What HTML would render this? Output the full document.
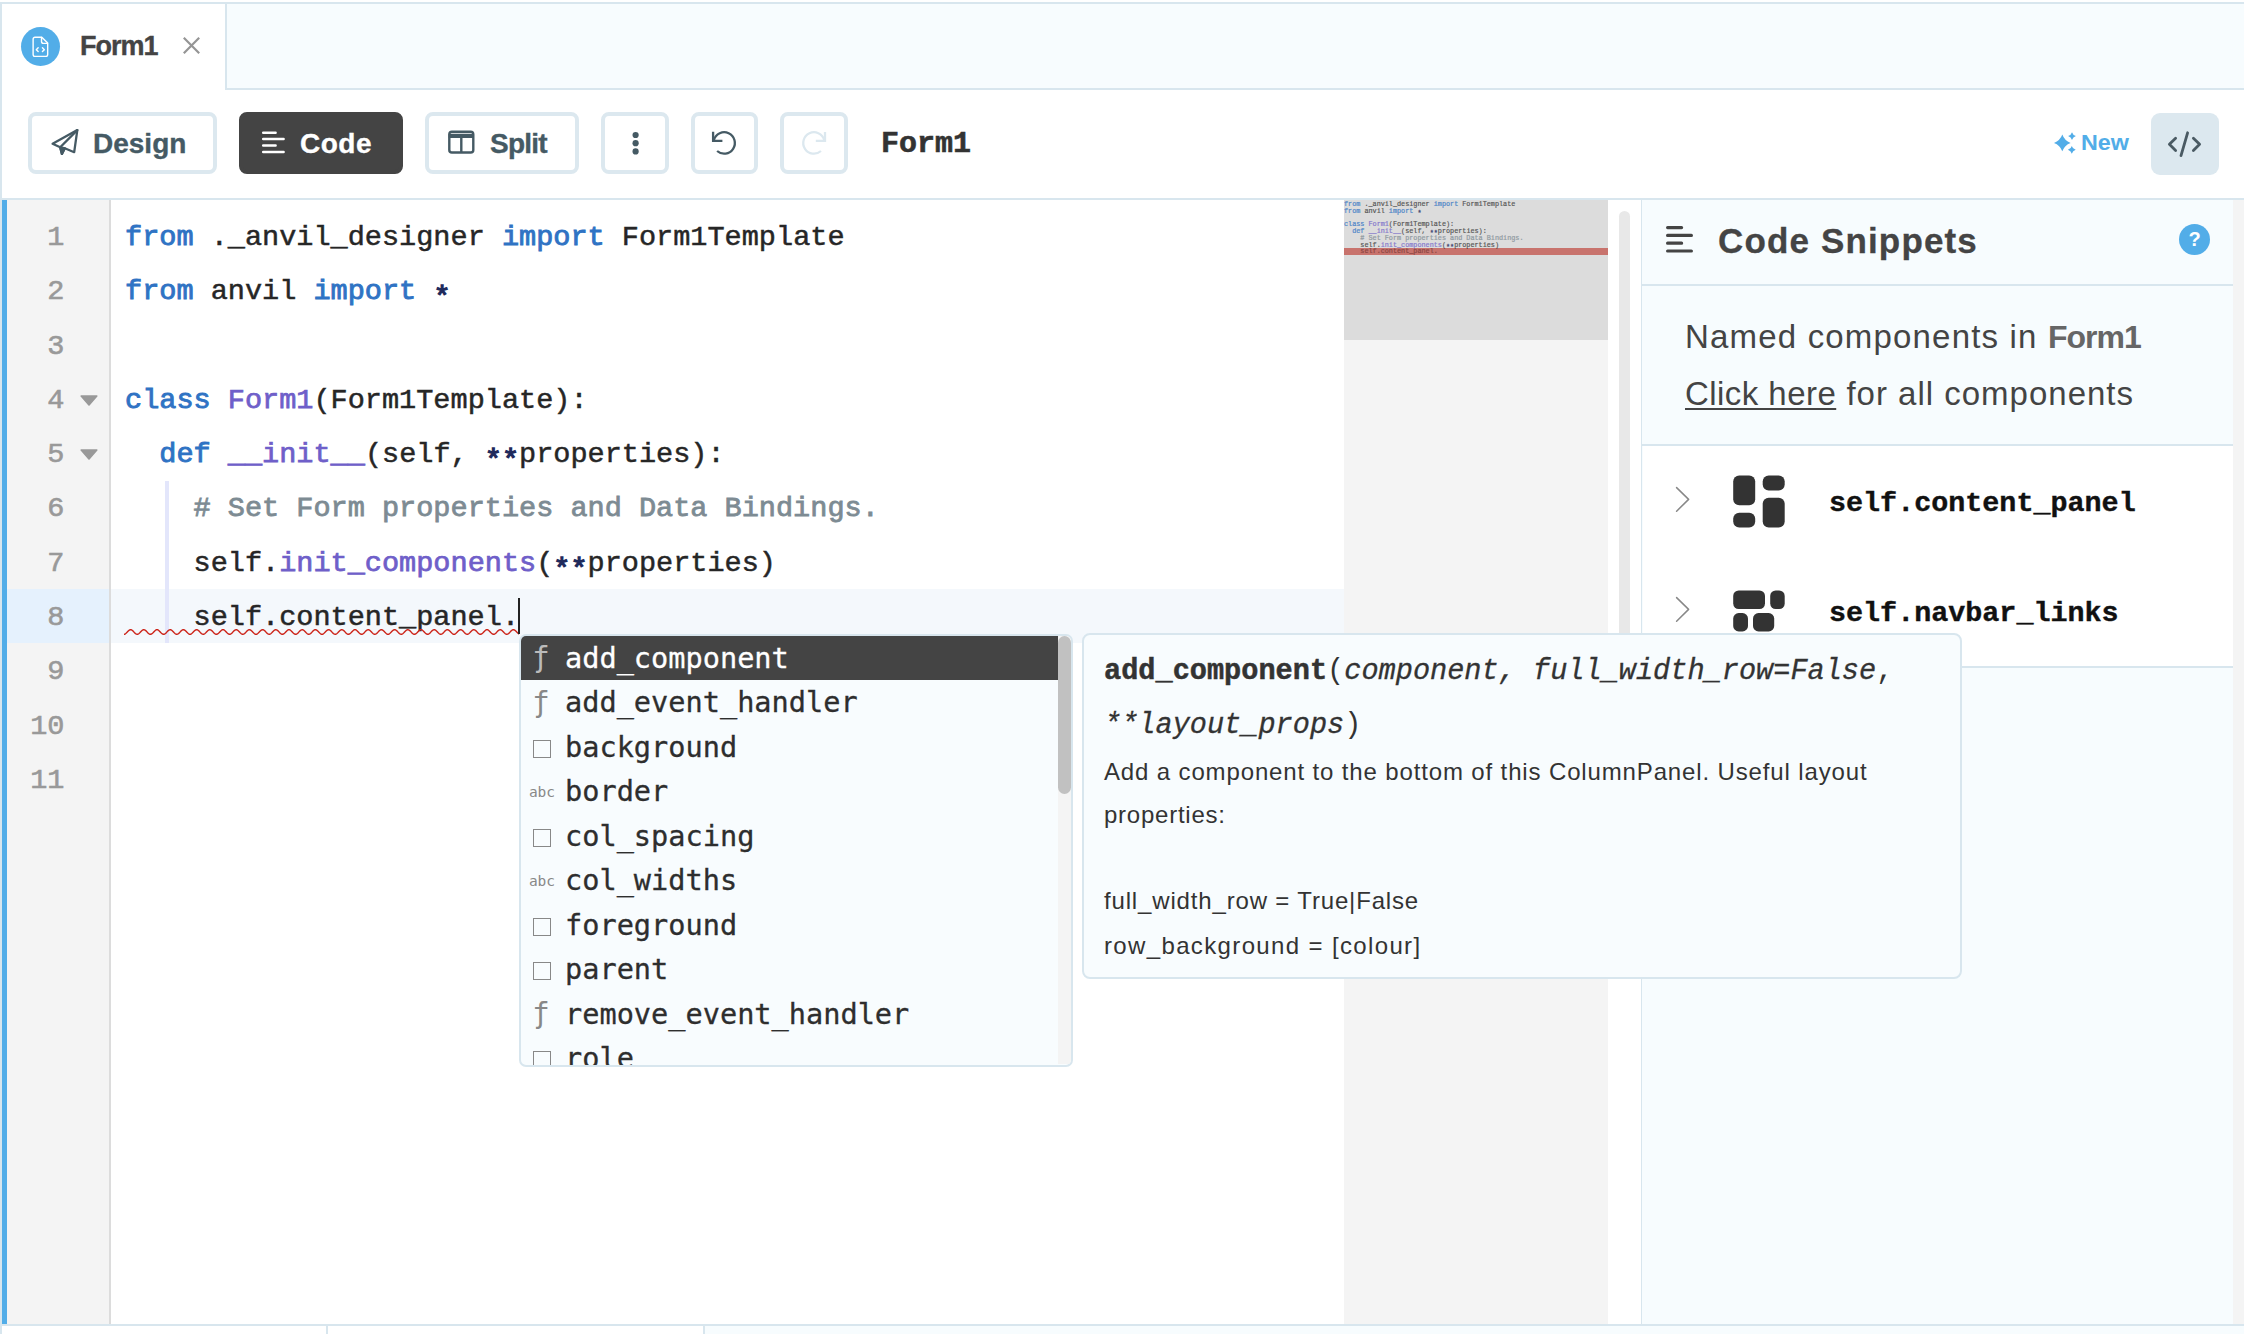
<!DOCTYPE html>
<html lang="en">
<head>
<meta charset="utf-8">
<title>Form1 - Code</title>
<style>
*{box-sizing:border-box;margin:0;padding:0}
html,body{width:2244px;height:1334px;overflow:hidden;background:#fff}
body{position:relative;font-family:"Liberation Sans",sans-serif;color:#444}
.abs{position:absolute}
.sans{font-family:"Liberation Sans",sans-serif}
.mono{font-family:"Liberation Mono",monospace}
.dj{font-family:"DejaVu Sans Mono","Liberation Mono",monospace}
.t{position:absolute;white-space:pre;line-height:1}
/* frame */
#btop{left:0;top:2px;width:2244px;height:2px;background:#d8e6ee}
#bleft{left:0;top:2px;width:2px;height:1332px;background:#d8e6ee}
#tabbar{left:227px;top:4px;width:2017px;height:84px;background:#f7fcfe}
#tabbar-b{left:225px;top:88px;width:2019px;height:2px;background:#d8e6ee}
#tab-r{left:225px;top:4px;width:2px;height:85px;background:#d8e6ee}
#tabicon{left:21px;top:27px;width:39px;height:39px;border-radius:50%;background:#52ade8}
/* toolbar */
.btn{position:absolute;top:112px;height:62px;border:4px solid #dce8ef;border-radius:8px;background:#fff}
.btn.dark{background:#444;border-color:#444}
.btxt{font-weight:bold;color:#455a64;-webkit-text-stroke:.35px currentColor}
#tool-b{left:2px;top:198px;width:2242px;height:2px;background:#d8e6ee}

/* editor */
#gutter{left:7px;top:200px;width:102px;height:1124px;background:#f4f4f4}
#gutter-b{left:109px;top:200px;width:2px;height:1124px;background:#dcdcdc}
#bluebar{left:2px;top:200px;width:5px;height:1124px;background:#52ade8}
#actg{left:7px;top:589px;width:102px;height:54px;background:#e5f1fd}
#actl{left:111px;top:589px;width:1233px;height:54px;background:#f4f8fc}
.ln{position:absolute;left:7px;width:57.5px;text-align:right;color:#999;white-space:pre;font-size:28.55px;height:54.29px;line-height:54.29px}
.cl{position:absolute;left:125px;color:#262626;white-space:pre;font-size:28.55px;height:54.29px;line-height:54.29px}
.cl,.ln{font-family:"Liberation Mono",monospace;padding-top:2.04px;-webkit-text-stroke:.5px currentColor}
.ln{-webkit-text-stroke:.6px currentColor}
.k{color:#2f73c4;-webkit-text-stroke:.9px #2f73c4}.f{color:#6f5fc9;-webkit-text-stroke:.75px #6f5fc9}.o{color:#1f2a5c;position:relative;top:5.8px;-webkit-text-stroke:1.3px #1f2a5c}.c{color:#7d8b93;-webkit-text-stroke:.8px #7d8b93}
.fold{position:absolute;left:80px;width:18px;height:11px}

/* minimap */
#mm{left:1344px;top:200px;width:264px;height:1124px;background:#f4f4f4;overflow:hidden}
#mmv{left:0;top:0;width:264px;height:140px;background:#dcdcdc}
#mmerr{left:0;top:48.3px;width:264px;height:7.2px;background:#c8736d}
.ml{position:absolute;left:0;white-space:pre;font-family:"Liberation Mono",monospace;font-size:27.2px;line-height:27.2px;height:27.2px;color:#333;transform:scale(.25);transform-origin:0 0;-webkit-text-stroke:.7px currentColor;opacity:.8}
.ml .k{-webkit-text-stroke:.9px #2f73c4}
#sbar{left:1619px;top:211px;width:11px;height:600px;border-radius:6px;background:#e8e8e8}
/* right panel */
#rp{left:1641px;top:200px;width:592px;height:1124px;background:#f7fcfe;border-left:1.5px solid #d8e6ee}
#rstrip{left:2233px;top:200px;width:11px;height:1124px;background:#f4f4f4}
.hb{position:absolute;left:1642px;width:591px;height:2px;background:#d8e6ee}
#rows{left:1642.5px;top:446px;width:590.5px;height:220px;background:#fff}
#help{left:2179px;top:224px;width:31px;height:31px;border-radius:50%;background:#52ade8}

/* popup */
#pop{left:519px;top:634px;width:553.5px;height:433px;border:2px solid #d8e6ee;border-radius:7px;background:#f8fcfe;overflow:hidden}
#popsel{left:0;top:0;width:537px;height:43.6px;background:#444}
#poptrack{left:537px;top:0;width:13px;height:428px;background:#f4f4f4}
#popthumb{left:537px;top:0;width:13px;height:158px;border-radius:7px;background:#c1c1c1}
.pi{position:absolute;left:44px;-webkit-text-stroke:.3px currentColor;white-space:pre;font-family:"DejaVu Sans Mono","Liberation Mono",monospace;font-size:28.6px;line-height:44.45px;height:44.45px;color:#2e2e2e}
.pic{position:absolute;left:0;width:40px;text-align:center;white-space:pre;font-family:"DejaVu Sans Mono","Liberation Mono",monospace;color:#888;line-height:44.45px;height:44.45px}
/* tooltip */
#tip{left:1082px;top:633px;width:880px;height:346px;border:2px solid #d8e6ee;border-radius:8px;background:#f8fcfe}
.tm{position:absolute;left:1104px;white-space:pre;font-family:"Liberation Mono",monospace;font-size:28.6px;line-height:54px;height:54px;color:#333}
.tm i{-webkit-text-stroke:.3px currentColor}
.tm b{-webkit-text-stroke:.5px currentColor}
.ts{position:absolute;left:1104px;white-space:pre;font-family:"Liberation Sans",sans-serif;font-size:24px;line-height:43.5px;height:43.5px;color:#333}
</style>
</head>
<body>
<!-- frame -->
<div class="abs" id="btop"></div>
<div class="abs" id="bleft"></div>
<div class="abs" id="tabbar"></div>
<div class="abs" id="tabbar-b"></div>
<div class="abs" id="tab-r"></div>

<!-- tab -->
<div class="abs" id="tabicon"></div>
<svg class="abs" style="left:32.2px;top:36px" width="16.8" height="21.6" viewBox="0 0 18 23" fill="none" stroke="#fff" stroke-width="1.5" stroke-linejoin="round" stroke-linecap="round">
  <path d="M3.2 1.2h7.3l6.3 6.3v12.3a2 2 0 0 1-2 2H3.2a2 2 0 0 1-2-2V3.2a2 2 0 0 1 2-2z"/>
  <path d="M10.2 1.4v4.4a2 2 0 0 0 2 2h4.4"/>
  <path d="M6.6 12.6l-2 2 2 2M11.2 12.6l2 2-2 2" stroke-width="1.5"/>
</svg>
<div class="t sans" id="tabtxt" style="-webkit-text-stroke:.35px #444;left:80px;top:33px;font-size:27px;letter-spacing:-1px;font-weight:bold;color:#444">Form1</div>
<svg class="abs" style="left:183px;top:37px" width="18" height="18" viewBox="0 0 18 18" stroke="#959595" stroke-width="2.2" stroke-linecap="butt"><path d="M.8 .8l15.4 15.4M16.2 .8L.8 16.2"/></svg>

<!-- toolbar -->
<div class="btn" style="left:28px;width:189px"></div>
<div class="btn dark" style="left:239px;width:164px"></div>
<div class="btn" style="left:425px;width:154px"></div>
<div class="btn" style="left:601px;width:68px"></div>
<div class="btn" style="left:691px;width:67px"></div>
<div class="btn" style="left:780px;width:68px"></div>

<div class="t sans btxt" id="t-design" style="left:93px;top:129.5px;font-size:28px">Design</div>
<div class="t sans btxt" id="t-code" style="left:300px;top:129.5px;font-size:28px;letter-spacing:.5px;color:#fff">Code</div>
<div class="t sans btxt" id="t-split" style="left:490px;top:129.5px;font-size:28px;letter-spacing:-.8px">Split</div>
<div class="t mono" id="t-form1" style="left:881px;top:129px;-webkit-text-stroke:.6px #333;font-size:30px;font-weight:bold;color:#333">Form1</div>
<div class="t sans" id="t-new" style="left:2081.3px;top:132.6px;transform:scaleX(1.085);transform-origin:0 0;font-size:21.5px;font-weight:bold;color:#52ade8">New</div>
<div class="abs" id="codebtn" style="left:2151px;top:113px;width:68px;height:62px;border-radius:9px;background:#dce8ef"></div>
<div class="abs" id="tool-b"></div>
<!-- toolbar icons -->
<svg class="abs" style="left:48px;top:124px" width="36" height="36" viewBox="48 124 36 36" fill="none" stroke="#455a64" stroke-width="2.3" stroke-linejoin="round" stroke-linecap="round">
  <path d="M52.6 143.7L77.3 130.1L74.2 152.2L64.8 148.3L61.9 153.9L60.2 147.2Z"/>
  <path d="M77.3 130.1L60.2 147.2"/>
  <path d="M60.2 147.2L61.9 153.9L64.8 148.3Z" fill="#455a64"/>
</svg>
<svg class="abs" style="left:258px;top:128px" width="32" height="28" viewBox="258 128 32 28" fill="none" stroke="#fff" stroke-width="2.5" stroke-linecap="round">
  <path d="M263.2 132.7H275.6M263.2 139.1H283.6M263.2 145.5H275.6M263.2 151.9H283.6"/>
</svg>
<svg class="abs" style="left:446px;top:128px" width="32" height="28" viewBox="446 128 32 28" fill="none" stroke="#455a64" stroke-width="2.4" stroke-linejoin="round">
  <rect x="449.3" y="131.8" width="24" height="20.7" rx="2.6"/>
  <path d="M449.3 134.4H473.3V137.4H449.3Z" fill="#455a64" stroke-width="1.2"/>
  <path d="M461.3 136V152.5"/>
</svg>
<svg class="abs" style="left:628px;top:128px" width="16" height="30" viewBox="628 128 16 30" fill="#455a64">
  <circle cx="635.6" cy="135" r="3.1"/><circle cx="635.6" cy="143.2" r="3.1"/><circle cx="635.6" cy="151.4" r="3.1"/>
</svg>
<svg class="abs" style="left:706px;top:126px" width="36" height="34" viewBox="706 126 36 34" fill="none" stroke="#455a64" stroke-width="2.3" stroke-linecap="butt">
  <path d="M713.9 139.9A10.7 10.7 0 1 1 717.1 151"/>
  <path d="M713.1 131.8V140.8H722.4"/>
</svg>
<svg class="abs" style="left:796px;top:126px" width="36" height="34" viewBox="796 126 36 34" fill="none" stroke="#dce8ef" stroke-width="2.3" stroke-linecap="butt">
  <path d="M824.2 139.9A10.7 10.7 0 1 0 821 151"/>
  <path d="M825 132V140.8H815.8"/>
</svg>
<svg class="abs" style="left:2052px;top:130px" width="28" height="28" viewBox="2052 130 28 28" fill="#52ade8">
  <path d="M2062.3 134.6Q2064.5 140.7 2070.6 142.9Q2064.5 145.1 2062.3 151.2Q2060.1 145.1 2054.0 142.9Q2060.1 140.7 2062.3 134.6Z"/>
  <path d="M2072.0 132.2Q2072.9 135.2 2075.9 136.1Q2072.9 137.0 2072.0 140.0Q2071.1 137.0 2068.1 136.1Q2071.1 135.2 2072.0 132.2Z"/>
  <path d="M2071.8 145.9Q2072.7 148.9 2075.7 149.8Q2072.7 150.7 2071.8 153.7Q2070.9 150.7 2067.9 149.8Q2070.9 148.9 2071.8 145.9Z"/>
</svg>
<svg class="abs" style="left:2160px;top:126px" width="50" height="36" viewBox="2160 126 50 36" fill="none" stroke="#4a5a63" stroke-width="2.8" stroke-linecap="round" stroke-linejoin="round">
  <path d="M2175.6 138.2L2169.4 144.3L2175.6 150.4"/>
  <path d="M2187.6 132.8L2181 155.6"/>
  <path d="M2193.4 138.2L2199.6 144.3L2193.4 150.4"/>
</svg>


<!-- editor -->
<div class="abs" id="bluebar"></div>
<div class="abs" id="gutter"></div>
<div class="abs" id="gutter-b"></div>
<div class="abs" id="actg"></div>
<div class="abs" id="actl"></div>
<div class="abs" id="iguide" style="left:165px;top:480.5px;width:4px;height:162.5px;background:#e3e6fb"></div>
<div class="ln" style="top:209.00px">1</div>
<div class="cl" id="L1" style="top:209.00px"><span class="k">from</span> ._anvil_designer <span class="k">import</span> Form1Template</div>
<div class="ln" style="top:263.29px">2</div>
<div class="cl" id="L2" style="top:263.29px"><span class="k">from</span> anvil <span class="k">import</span> <span class="o">*</span></div>
<div class="ln" style="top:317.58px">3</div>
<div class="ln" style="top:371.87px">4</div>
<div class="cl" id="L4" style="top:371.87px"><span class="k">class</span> <span class="f">Form1</span>(Form1Template):</div>
<div class="ln" style="top:426.16px">5</div>
<div class="cl" id="L5" style="top:426.16px">  <span class="k">def</span> <span class="f">__init__</span>(self, <span class="o">**</span>properties):</div>
<div class="ln" style="top:480.45px">6</div>
<div class="cl" id="L6" style="top:480.45px">    <span class="c"># Set Form properties and Data Bindings.</span></div>
<div class="ln" style="top:534.74px">7</div>
<div class="cl" id="L7" style="top:534.74px">    self.<span class="f">init_components</span>(<span class="o">**</span>properties)</div>
<div class="ln" style="top:589.03px">8</div>
<div class="cl" id="L8" style="top:589.03px">    self.content_panel.</div>
<div class="ln" style="top:643.32px">9</div>
<div class="ln" style="top:697.61px">10</div>
<div class="ln" style="top:751.90px">11</div>
<svg class="fold" style="top:394.5px" viewBox="0 0 18 11"><path d="M1.2 1h15.6L9 10z" fill="#999" stroke="#999" stroke-width="1.6" stroke-linejoin="round"/></svg>
<svg class="fold" style="top:448.8px" viewBox="0 0 18 11"><path d="M1.2 1h15.6L9 10z" fill="#999" stroke="#999" stroke-width="1.6" stroke-linejoin="round"/></svg>
<svg class="abs" style="left:120px;top:626px" width="404" height="14" viewBox="120 626 404 14" fill="none" stroke="#cc2419" stroke-width="1.4" stroke-linejoin="round"><polyline points="124.0,634.30 124.5,634.24 125.0,634.04 125.5,633.74 126.0,633.33 126.5,632.85 127.0,632.33 127.5,631.78 128.0,631.25 128.5,630.76 129.0,630.34 129.5,630.01 130.0,629.79 130.5,629.70 131.0,629.74 131.5,629.91 132.0,630.19 132.5,630.58 133.0,631.04 133.5,631.56 134.0,632.11 134.5,632.65 135.0,633.15 135.5,633.59 136.0,633.93 136.5,634.17 137.0,634.29 137.5,634.28 138.0,634.14 138.5,633.87 139.0,633.51 139.5,633.05 140.0,632.54 140.5,632.00 141.0,631.46 141.5,630.95 142.0,630.49 142.5,630.13 143.0,629.86 143.5,629.72 144.0,629.71 144.5,629.83 145.0,630.07 145.5,630.41 146.0,630.85 146.5,631.35 147.0,631.89 147.5,632.44 148.0,632.96 148.5,633.42 149.0,633.81 149.5,634.09 150.0,634.26 150.5,634.30 151.0,634.21 151.5,633.99 152.0,633.66 152.5,633.24 153.0,632.75 153.5,632.22 154.0,631.67 154.5,631.15 155.0,630.67 155.5,630.26 156.0,629.96 156.5,629.76 157.0,629.70 157.5,629.76 158.0,629.96 158.5,630.26 159.0,630.67 159.5,631.15 160.0,631.67 160.5,632.22 161.0,632.75 161.5,633.24 162.0,633.66 162.5,633.99 163.0,634.21 163.5,634.30 164.0,634.26 164.5,634.09 165.0,633.81 165.5,633.42 166.0,632.96 166.5,632.44 167.0,631.89 167.5,631.35 168.0,630.85 168.5,630.41 169.0,630.07 169.5,629.83 170.0,629.71 170.5,629.72 171.0,629.86 171.5,630.13 172.0,630.49 172.5,630.95 173.0,631.46 173.5,632.00 174.0,632.54 174.5,633.05 175.0,633.51 175.5,633.87 176.0,634.14 176.5,634.28 177.0,634.29 177.5,634.17 178.0,633.93 178.5,633.59 179.0,633.15 179.5,632.65 180.0,632.11 180.5,631.56 181.0,631.04 181.5,630.58 182.0,630.19 182.5,629.91 183.0,629.74 183.5,629.70 184.0,629.79 184.5,630.01 185.0,630.34 185.5,630.76 186.0,631.25 186.5,631.78 187.0,632.33 187.5,632.85 188.0,633.33 188.5,633.74 189.0,634.04 189.5,634.24 190.0,634.30 190.5,634.24 191.0,634.04 191.5,633.74 192.0,633.33 192.5,632.85 193.0,632.33 193.5,631.78 194.0,631.25 194.5,630.76 195.0,630.34 195.5,630.01 196.0,629.79 196.5,629.70 197.0,629.74 197.5,629.91 198.0,630.19 198.5,630.58 199.0,631.04 199.5,631.56 200.0,632.11 200.5,632.65 201.0,633.15 201.5,633.59 202.0,633.93 202.5,634.17 203.0,634.29 203.5,634.28 204.0,634.14 204.5,633.87 205.0,633.51 205.5,633.05 206.0,632.54 206.5,632.00 207.0,631.46 207.5,630.95 208.0,630.49 208.5,630.13 209.0,629.86 209.5,629.72 210.0,629.71 210.5,629.83 211.0,630.07 211.5,630.41 212.0,630.85 212.5,631.35 213.0,631.89 213.5,632.44 214.0,632.96 214.5,633.42 215.0,633.81 215.5,634.09 216.0,634.26 216.5,634.30 217.0,634.21 217.5,633.99 218.0,633.66 218.5,633.24 219.0,632.75 219.5,632.22 220.0,631.67 220.5,631.15 221.0,630.67 221.5,630.26 222.0,629.96 222.5,629.76 223.0,629.70 223.5,629.76 224.0,629.96 224.5,630.26 225.0,630.67 225.5,631.15 226.0,631.67 226.5,632.22 227.0,632.75 227.5,633.24 228.0,633.66 228.5,633.99 229.0,634.21 229.5,634.30 230.0,634.26 230.5,634.09 231.0,633.81 231.5,633.42 232.0,632.96 232.5,632.44 233.0,631.89 233.5,631.35 234.0,630.85 234.5,630.41 235.0,630.07 235.5,629.83 236.0,629.71 236.5,629.72 237.0,629.86 237.5,630.13 238.0,630.49 238.5,630.95 239.0,631.46 239.5,632.00 240.0,632.54 240.5,633.05 241.0,633.51 241.5,633.87 242.0,634.14 242.5,634.28 243.0,634.29 243.5,634.17 244.0,633.93 244.5,633.59 245.0,633.15 245.5,632.65 246.0,632.11 246.5,631.56 247.0,631.04 247.5,630.58 248.0,630.19 248.5,629.91 249.0,629.74 249.5,629.70 250.0,629.79 250.5,630.01 251.0,630.34 251.5,630.76 252.0,631.25 252.5,631.78 253.0,632.33 253.5,632.85 254.0,633.33 254.5,633.74 255.0,634.04 255.5,634.24 256.0,634.30 256.5,634.24 257.0,634.04 257.5,633.74 258.0,633.33 258.5,632.85 259.0,632.33 259.5,631.78 260.0,631.25 260.5,630.76 261.0,630.34 261.5,630.01 262.0,629.79 262.5,629.70 263.0,629.74 263.5,629.91 264.0,630.19 264.5,630.58 265.0,631.04 265.5,631.56 266.0,632.11 266.5,632.65 267.0,633.15 267.5,633.59 268.0,633.93 268.5,634.17 269.0,634.29 269.5,634.28 270.0,634.14 270.5,633.87 271.0,633.51 271.5,633.05 272.0,632.54 272.5,632.00 273.0,631.46 273.5,630.95 274.0,630.49 274.5,630.13 275.0,629.86 275.5,629.72 276.0,629.71 276.5,629.83 277.0,630.07 277.5,630.41 278.0,630.85 278.5,631.35 279.0,631.89 279.5,632.44 280.0,632.96 280.5,633.42 281.0,633.81 281.5,634.09 282.0,634.26 282.5,634.30 283.0,634.21 283.5,633.99 284.0,633.66 284.5,633.24 285.0,632.75 285.5,632.22 286.0,631.67 286.5,631.15 287.0,630.67 287.5,630.26 288.0,629.96 288.5,629.76 289.0,629.70 289.5,629.76 290.0,629.96 290.5,630.26 291.0,630.67 291.5,631.15 292.0,631.67 292.5,632.22 293.0,632.75 293.5,633.24 294.0,633.66 294.5,633.99 295.0,634.21 295.5,634.30 296.0,634.26 296.5,634.09 297.0,633.81 297.5,633.42 298.0,632.96 298.5,632.44 299.0,631.89 299.5,631.35 300.0,630.85 300.5,630.41 301.0,630.07 301.5,629.83 302.0,629.71 302.5,629.72 303.0,629.86 303.5,630.13 304.0,630.49 304.5,630.95 305.0,631.46 305.5,632.00 306.0,632.54 306.5,633.05 307.0,633.51 307.5,633.87 308.0,634.14 308.5,634.28 309.0,634.29 309.5,634.17 310.0,633.93 310.5,633.59 311.0,633.15 311.5,632.65 312.0,632.11 312.5,631.56 313.0,631.04 313.5,630.58 314.0,630.19 314.5,629.91 315.0,629.74 315.5,629.70 316.0,629.79 316.5,630.01 317.0,630.34 317.5,630.76 318.0,631.25 318.5,631.78 319.0,632.33 319.5,632.85 320.0,633.33 320.5,633.74 321.0,634.04 321.5,634.24 322.0,634.30 322.5,634.24 323.0,634.04 323.5,633.74 324.0,633.33 324.5,632.85 325.0,632.33 325.5,631.78 326.0,631.25 326.5,630.76 327.0,630.34 327.5,630.01 328.0,629.79 328.5,629.70 329.0,629.74 329.5,629.91 330.0,630.19 330.5,630.58 331.0,631.04 331.5,631.56 332.0,632.11 332.5,632.65 333.0,633.15 333.5,633.59 334.0,633.93 334.5,634.17 335.0,634.29 335.5,634.28 336.0,634.14 336.5,633.87 337.0,633.51 337.5,633.05 338.0,632.54 338.5,632.00 339.0,631.46 339.5,630.95 340.0,630.49 340.5,630.13 341.0,629.86 341.5,629.72 342.0,629.71 342.5,629.83 343.0,630.07 343.5,630.41 344.0,630.85 344.5,631.35 345.0,631.89 345.5,632.44 346.0,632.96 346.5,633.42 347.0,633.81 347.5,634.09 348.0,634.26 348.5,634.30 349.0,634.21 349.5,633.99 350.0,633.66 350.5,633.24 351.0,632.75 351.5,632.22 352.0,631.67 352.5,631.15 353.0,630.67 353.5,630.26 354.0,629.96 354.5,629.76 355.0,629.70 355.5,629.76 356.0,629.96 356.5,630.26 357.0,630.67 357.5,631.15 358.0,631.67 358.5,632.22 359.0,632.75 359.5,633.24 360.0,633.66 360.5,633.99 361.0,634.21 361.5,634.30 362.0,634.26 362.5,634.09 363.0,633.81 363.5,633.42 364.0,632.96 364.5,632.44 365.0,631.89 365.5,631.35 366.0,630.85 366.5,630.41 367.0,630.07 367.5,629.83 368.0,629.71 368.5,629.72 369.0,629.86 369.5,630.13 370.0,630.49 370.5,630.95 371.0,631.46 371.5,632.00 372.0,632.54 372.5,633.05 373.0,633.51 373.5,633.87 374.0,634.14 374.5,634.28 375.0,634.29 375.5,634.17 376.0,633.93 376.5,633.59 377.0,633.15 377.5,632.65 378.0,632.11 378.5,631.56 379.0,631.04 379.5,630.58 380.0,630.19 380.5,629.91 381.0,629.74 381.5,629.70 382.0,629.79 382.5,630.01 383.0,630.34 383.5,630.76 384.0,631.25 384.5,631.78 385.0,632.33 385.5,632.85 386.0,633.33 386.5,633.74 387.0,634.04 387.5,634.24 388.0,634.30 388.5,634.24 389.0,634.04 389.5,633.74 390.0,633.33 390.5,632.85 391.0,632.33 391.5,631.78 392.0,631.25 392.5,630.76 393.0,630.34 393.5,630.01 394.0,629.79 394.5,629.70 395.0,629.74 395.5,629.91 396.0,630.19 396.5,630.58 397.0,631.04 397.5,631.56 398.0,632.11 398.5,632.65 399.0,633.15 399.5,633.59 400.0,633.93 400.5,634.17 401.0,634.29 401.5,634.28 402.0,634.14 402.5,633.87 403.0,633.51 403.5,633.05 404.0,632.54 404.5,632.00 405.0,631.46 405.5,630.95 406.0,630.49 406.5,630.13 407.0,629.86 407.5,629.72 408.0,629.71 408.5,629.83 409.0,630.07 409.5,630.41 410.0,630.85 410.5,631.35 411.0,631.89 411.5,632.44 412.0,632.96 412.5,633.42 413.0,633.81 413.5,634.09 414.0,634.26 414.5,634.30 415.0,634.21 415.5,633.99 416.0,633.66 416.5,633.24 417.0,632.75 417.5,632.22 418.0,631.67 418.5,631.15 419.0,630.67 419.5,630.26 420.0,629.96 420.5,629.76 421.0,629.70 421.5,629.76 422.0,629.96 422.5,630.26 423.0,630.67 423.5,631.15 424.0,631.67 424.5,632.22 425.0,632.75 425.5,633.24 426.0,633.66 426.5,633.99 427.0,634.21 427.5,634.30 428.0,634.26 428.5,634.09 429.0,633.81 429.5,633.42 430.0,632.96 430.5,632.44 431.0,631.89 431.5,631.35 432.0,630.85 432.5,630.41 433.0,630.07 433.5,629.83 434.0,629.71 434.5,629.72 435.0,629.86 435.5,630.13 436.0,630.49 436.5,630.95 437.0,631.46 437.5,632.00 438.0,632.54 438.5,633.05 439.0,633.51 439.5,633.87 440.0,634.14 440.5,634.28 441.0,634.29 441.5,634.17 442.0,633.93 442.5,633.59 443.0,633.15 443.5,632.65 444.0,632.11 444.5,631.56 445.0,631.04 445.5,630.58 446.0,630.19 446.5,629.91 447.0,629.74 447.5,629.70 448.0,629.79 448.5,630.01 449.0,630.34 449.5,630.76 450.0,631.25 450.5,631.78 451.0,632.33 451.5,632.85 452.0,633.33 452.5,633.74 453.0,634.04 453.5,634.24 454.0,634.30 454.5,634.24 455.0,634.04 455.5,633.74 456.0,633.33 456.5,632.85 457.0,632.33 457.5,631.78 458.0,631.25 458.5,630.76 459.0,630.34 459.5,630.01 460.0,629.79 460.5,629.70 461.0,629.74 461.5,629.91 462.0,630.19 462.5,630.58 463.0,631.04 463.5,631.56 464.0,632.11 464.5,632.65 465.0,633.15 465.5,633.59 466.0,633.93 466.5,634.17 467.0,634.29 467.5,634.28 468.0,634.14 468.5,633.87 469.0,633.51 469.5,633.05 470.0,632.54 470.5,632.00 471.0,631.46 471.5,630.95 472.0,630.49 472.5,630.13 473.0,629.86 473.5,629.72 474.0,629.71 474.5,629.83 475.0,630.07 475.5,630.41 476.0,630.85 476.5,631.35 477.0,631.89 477.5,632.44 478.0,632.96 478.5,633.42 479.0,633.81 479.5,634.09 480.0,634.26 480.5,634.30 481.0,634.21 481.5,633.99 482.0,633.66 482.5,633.24 483.0,632.75 483.5,632.22 484.0,631.67 484.5,631.15 485.0,630.67 485.5,630.26 486.0,629.96 486.5,629.76 487.0,629.70 487.5,629.76 488.0,629.96 488.5,630.26 489.0,630.67 489.5,631.15 490.0,631.67 490.5,632.22 491.0,632.75 491.5,633.24 492.0,633.66 492.5,633.99 493.0,634.21 493.5,634.30 494.0,634.26 494.5,634.09 495.0,633.81 495.5,633.42 496.0,632.96 496.5,632.44 497.0,631.89 497.5,631.35 498.0,630.85 498.5,630.41 499.0,630.07 499.5,629.83 500.0,629.71 500.5,629.72 501.0,629.86 501.5,630.13 502.0,630.49 502.5,630.95 503.0,631.46 503.5,632.00 504.0,632.54 504.5,633.05 505.0,633.51 505.5,633.87 506.0,634.14 506.5,634.28 507.0,634.29 507.5,634.17 508.0,633.93 508.5,633.59 509.0,633.15 509.5,632.65 510.0,632.11 510.5,631.56 511.0,631.04 511.5,630.58 512.0,630.19 512.5,629.91 513.0,629.74 513.5,629.70 514.0,629.79 514.5,630.01 515.0,630.34 515.5,630.76 516.0,631.25 516.5,631.78 517.0,632.33 517.5,632.85 518.0,633.33 518.5,633.74 519.0,634.04"/></svg>
<div class="abs" id="cursor" style="left:518px;top:598px;width:2px;height:36px;background:#222"></div>
<!-- minimap -->
<div class="abs" id="mm">
<div class="abs" id="mmv"></div>
<div class="abs" id="mmerr"></div>
<div class="ml" style="top:0.70px"><span class="k">from</span> ._anvil_designer <span class="k">import</span> Form1Template</div>
<div class="ml" style="top:7.50px"><span class="k">from</span> anvil <span class="k">import</span> <span class="o">*</span></div>
<div class="ml" style="top:21.10px"><span class="k">class</span> <span class="f">Form1</span>(Form1Template):</div>
<div class="ml" style="top:27.90px">  <span class="k">def</span> <span class="f">__init__</span>(self, <span class="o">**</span>properties):</div>
<div class="ml" style="top:34.70px">    <span class="c"># Set Form properties and Data Bindings.</span></div>
<div class="ml" style="top:41.50px">    self.<span class="f">init_components</span>(<span class="o">**</span>properties)</div>
<div class="ml" style="top:48.30px;color:#7a3a36">    self.content_panel.</div>
</div>
<div class="abs" id="sbar"></div>
<!-- right panel -->
<div class="abs" id="rp"></div>
<div class="abs" id="rstrip"></div>
<div class="hb" style="top:284px"></div>
<div class="hb" style="top:444px"></div>
<div class="abs" id="rows"></div>
<div class="hb" style="top:666px"></div>
<svg class="abs" style="left:1662px;top:222px" width="36" height="34" viewBox="1662 222 36 34" fill="none" stroke="#444" stroke-width="3.2" stroke-linecap="round">
  <path d="M1667.6 227.6H1681.6M1667.6 235.4H1691.4M1667.6 243.2H1681.6M1667.6 251H1691.4"/>
</svg>
<div class="t sans" id="p-title" style="-webkit-text-stroke:.3px #444;left:1718px;top:223px;font-size:35px;font-weight:bold;letter-spacing:1.15px;color:#444">Code Snippets</div>
<div class="abs" id="help"></div>
<div class="t sans" id="p-q" style="left:2188.6px;top:229px;font-size:20px;font-weight:bold;color:#fff">?</div>
<div class="t sans" id="p-l1" style="left:1685px;top:319.5px;font-size:33px;letter-spacing:1.18px;color:#444">Named components in <b id="p-l1b" style="font-size:32px;letter-spacing:-1px;color:#666">Form1</b></div>
<div class="t sans" id="p-l2" style="left:1685px;top:377px;font-size:33px;letter-spacing:1px;color:#444"><span id="p-l2a" style="letter-spacing:.45px;text-decoration:underline;text-decoration-thickness:2.4px;text-underline-offset:3px">Click here</span> for all components</div>
<svg class="abs" style="left:1672px;top:484px" width="22" height="32" viewBox="1672 484 22 32" fill="none" stroke="#888" stroke-width="1.5" stroke-linecap="round" stroke-linejoin="round"><path d="M1676.6 487.6L1688.6 499.4L1676.6 511.2"/></svg>
<svg class="abs" style="left:1672px;top:594px" width="22" height="32" viewBox="1672 594 22 32" fill="none" stroke="#888" stroke-width="1.5" stroke-linecap="round" stroke-linejoin="round"><path d="M1676.6 597.6L1688.6 609.4L1676.6 621.2"/></svg>
<svg class="abs" style="left:1730px;top:472px" width="60" height="60" viewBox="1730 472 60 60" fill="#333">
  <rect x="1733.2" y="475.5" width="22" height="29.7" rx="6"/>
  <rect x="1762.7" y="475.5" width="22" height="15" rx="6"/>
  <rect x="1733.2" y="512.7" width="22" height="14.7" rx="6"/>
  <rect x="1762.7" y="497.7" width="22" height="29.7" rx="6"/>
</svg>
<svg class="abs" style="left:1730px;top:586px" width="60" height="50" viewBox="1730 586 60 50" fill="#333">
  <rect x="1733.2" y="590.5" width="31.8" height="18.5" rx="5.5"/>
  <rect x="1770.2" y="590.5" width="14.5" height="18.5" rx="5.5"/>
  <rect x="1733.2" y="613.1" width="14.8" height="18.3" rx="5.5"/>
  <rect x="1753" y="613.1" width="21.2" height="18.3" rx="5.5"/>
</svg>
<div class="t mono" id="p-c1" style="-webkit-text-stroke:.4px #111;left:1829px;top:490px;font-size:28.4px;font-weight:bold;color:#111">self.content_panel</div>
<div class="t mono" id="p-c2" style="-webkit-text-stroke:.4px #111;left:1829px;top:599.5px;font-size:28.4px;font-weight:bold;color:#111">self.navbar_links</div>

<!-- popup -->
<div class="abs" id="pop">
<div class="abs" id="popsel"></div>
<div class="abs" id="poptrack"></div>
<div class="abs" id="popthumb"></div>
<div class="pic" style="top:-0.60px;font-size:29px;color:#bbb">ƒ</div>
<div class="pi" id="pi0" style="top:0.00px;color:#fff">add_component</div>
<div class="pic" style="top:43.85px;font-size:29px">ƒ</div>
<div class="pi" id="pi1" style="top:44.45px">add_event_handler</div>
<div class="abs" style="left:12.3px;top:103.80px;width:18px;height:18px;border:1.7px solid #888"></div>
<div class="pi" id="pi2" style="top:88.90px">background</div>
<div class="pic" style="top:133.75px;font-size:14.5px;left:1px">abc</div>
<div class="pi" id="pi3" style="top:133.35px">border</div>
<div class="abs" style="left:12.3px;top:192.70px;width:18px;height:18px;border:1.7px solid #888"></div>
<div class="pi" id="pi4" style="top:177.80px">col_spacing</div>
<div class="pic" style="top:222.65px;font-size:14.5px;left:1px">abc</div>
<div class="pi" id="pi5" style="top:222.25px">col_widths</div>
<div class="abs" style="left:12.3px;top:281.60px;width:18px;height:18px;border:1.7px solid #888"></div>
<div class="pi" id="pi6" style="top:266.70px">foreground</div>
<div class="abs" style="left:12.3px;top:326.05px;width:18px;height:18px;border:1.7px solid #888"></div>
<div class="pi" id="pi7" style="top:311.15px">parent</div>
<div class="pic" style="top:355.00px;font-size:29px">ƒ</div>
<div class="pi" id="pi8" style="top:355.60px">remove_event_handler</div>
<div class="abs" style="left:12.3px;top:414.95px;width:18px;height:18px;border:1.7px solid #888"></div>
<div class="pi" id="pi9" style="top:400.05px">role</div>
</div>
<!-- tooltip -->
<div class="abs" id="tip"></div>
<div class="tm" id="tm1" style="top:644.8px"><b>add_component</b>(<i>component, full_width_row=False</i>,</div>
<div class="tm" id="tm2" style="top:699px"><i>**layout_props</i>)</div>
<div class="ts" id="ts1" style="top:750px;letter-spacing:.86px">Add a component to the bottom of this ColumnPanel. Useful layout</div>
<div class="ts" id="ts2" style="top:792.8px;letter-spacing:.75px">properties:</div>
<div class="ts" id="ts3" style="top:879.2px;letter-spacing:.84px">full_width_row = True|False</div>
<div class="ts" id="ts4" style="top:924px;letter-spacing:1.36px">row_background = [colour]</div>

<!-- bottom -->
<div class="abs" style="left:2px;top:1326px;width:2242px;height:8px;background:#fff"></div>
<div class="abs" style="left:705px;top:1326px;width:1539px;height:8px;background:#f7fcfe"></div>
<div class="abs" style="left:326px;top:1326px;width:2px;height:8px;background:#d8e6ee"></div>
<div class="abs" style="left:703px;top:1326px;width:2px;height:8px;background:#d8e6ee"></div>
<div class="abs" style="left:2px;top:1324px;width:2242px;height:2px;background:#d8e6ee"></div>

</body>
</html>
